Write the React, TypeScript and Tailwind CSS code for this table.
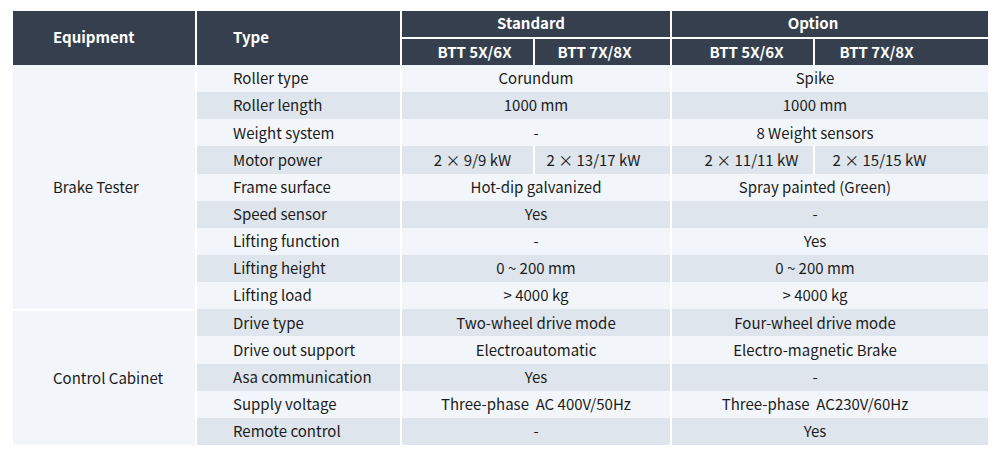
import React from 'react';

type Row = {
  type: string;
  std: string[];
  opt: string[];
};

const brakeRows: Row[] = [
  { type: 'Roller type', std: ['Corundum'], opt: ['Spike'] },
  { type: 'Roller length', std: ['1000 mm'], opt: ['1000 mm'] },
  { type: 'Weight system', std: ['-'], opt: ['8 Weight sensors'] },
  { type: 'Motor power', std: ['2 × 9/9 kW', '2 × 13/17 kW'], opt: ['2 × 11/11 kW', '2 × 15/15 kW'] },
  { type: 'Frame surface', std: ['Hot-dip galvanized'], opt: ['Spray painted (Green)'] },
  { type: 'Speed sensor', std: ['Yes'], opt: ['-'] },
  { type: 'Lifting function', std: ['-'], opt: ['Yes'] },
  { type: 'Lifting height', std: ['0 ~ 200 mm'], opt: ['0 ~ 200 mm'] },
  { type: 'Lifting load', std: ['> 4000 kg'], opt: ['> 4000 kg'] },
];

const cabinetRows: Row[] = [
  { type: 'Drive type', std: ['Two-wheel drive mode'], opt: ['Four-wheel drive mode'] },
  { type: 'Drive out support', std: ['Electroautomatic'], opt: ['Electro-magnetic Brake'] },
  { type: 'Asa communication', std: ['Yes'], opt: ['-'] },
  { type: 'Supply voltage', std: ['Three-phase  AC 400V/50Hz'], opt: ['Three-phase  AC230V/60Hz'] },
  { type: 'Remote control', std: ['-'], opt: ['Yes'] },
];

const cols = 'grid grid-cols-[182px_203px_131px_135px_141px_173px] gap-x-[2px]';

const DataRow = ({ row, dark }: { row: Row; dark: boolean }) => {
  const bg = dark ? 'bg-[#dee5ec]' : 'bg-[#f2f6fa]';
  const cell = `${bg} flex items-center justify-center whitespace-pre`;
  return (
    <>
      <div className={`${bg} flex items-center pl-[36px]`}>{row.type}</div>
      {row.std.length === 1 ? (
        <div className={`${cell} col-span-2`}>{row.std[0]}</div>
      ) : (
        <>
          <div className={`${cell} pl-[10px]`}>{row.std[0]}</div>
          <div className={`${cell} pr-[18px]`}>{row.std[1]}</div>
        </>
      )}
      {row.opt.length === 1 ? (
        <div className={`${cell} col-span-2 pr-[30px]`}>{row.opt[0]}</div>
      ) : (
        <>
          <div className={`${cell} pl-[18px]`}>{row.opt[0]}</div>
          <div className={`${cell} pr-[44px]`}>{row.opt[1]}</div>
        </>
      )}
    </>
  );
};

export default function App() {
  return (
    <div
      className="w-[1000px] h-[460px] bg-white pt-[11px] pl-[13px] text-[15px] text-[#1c1c1c]"
      style={{ fontFamily: '"Noto Sans CJK SC", "Noto Sans", sans-serif' }}
    >
      {/* header */}
      <div className={`${cols} grid-rows-[26px_26px] gap-y-[2px] bg-white font-bold text-white leading-none`}>
        <div className="row-span-2 bg-[#353f4e] flex items-center pl-[40px] pb-[3px]">Equipment</div>
        <div className="row-span-2 bg-[#353f4e] flex items-center pl-[36px] pb-[3px]">Type</div>
        <div className="col-span-2 bg-[#353f4e] flex items-center justify-center pr-[10px] pb-[4px]">Standard</div>
        <div className="col-span-2 bg-[#353f4e] flex items-center justify-center pr-[34px] pb-[4px]">Option</div>
        <div className="bg-[#353f4e] flex items-center justify-center pl-[14px] pb-[2px]">BTT 5X/6X</div>
        <div className="bg-[#353f4e] flex items-center justify-center pr-[16px] pb-[2px]">BTT 7X/8X</div>
        <div className="bg-[#353f4e] flex items-center justify-center pl-[8px] pb-[2px]">BTT 5X/6X</div>
        <div className="bg-[#353f4e] flex items-center justify-center pr-[50px] pb-[2px]">BTT 7X/8X</div>
      </div>

      {/* body */}
      <div className={`${cols} h-[380px] grid-rows-[repeat(14,minmax(0,1fr))] grid-flow-row-dense`}>
        <div className="col-start-1 row-start-1 row-span-9 bg-[#f2f6fa] flex items-center pl-[40px]">
          Brake Tester
        </div>
        {brakeRows.map((r, i) => (
          <DataRow key={r.type} row={r} dark={i % 2 === 1} />
        ))}
        <div className="col-start-1 row-start-10 row-span-5 bg-[#f2f6fa] border-t-2 border-white flex items-center pl-[40px]">
          Control Cabinet
        </div>
        {cabinetRows.map((r, i) => (
          <DataRow key={r.type} row={r} dark={i % 2 === 0} />
        ))}
      </div>
    </div>
  );
}
